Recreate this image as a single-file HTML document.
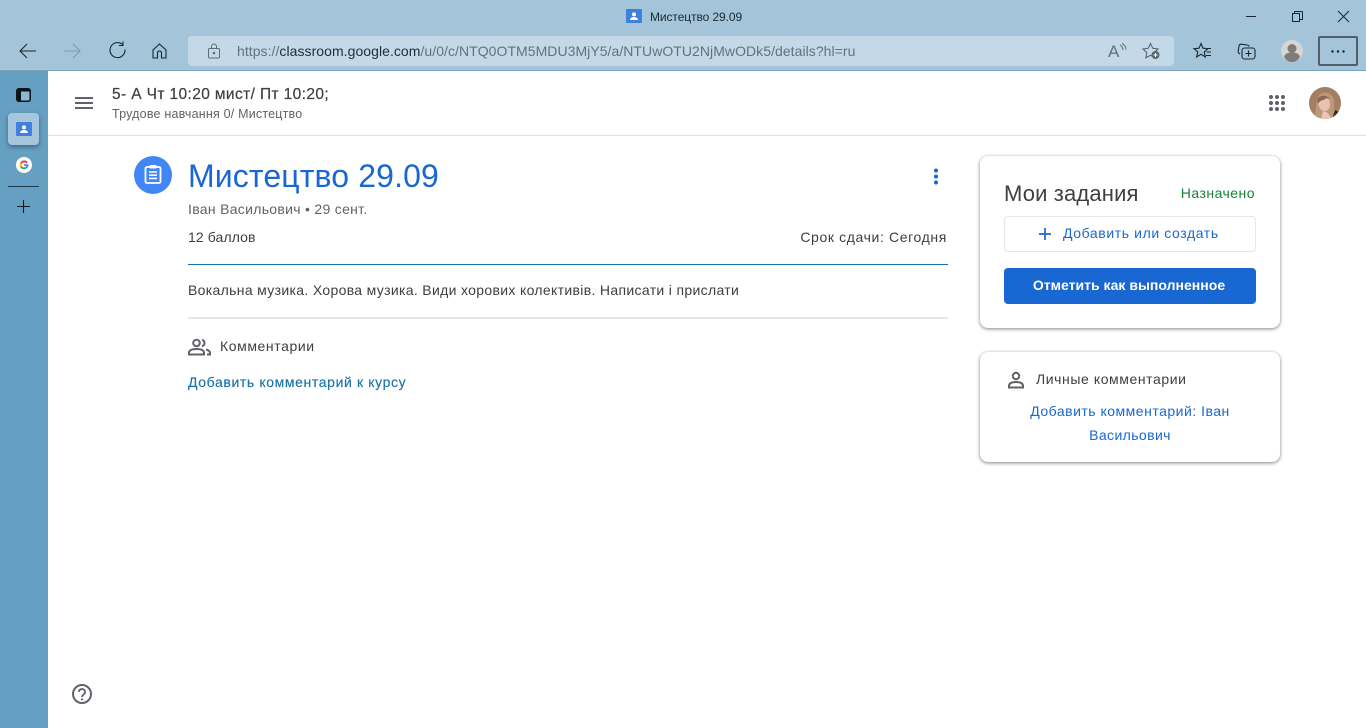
<!DOCTYPE html>
<html lang="ru"><head><meta charset="utf-8"><title>Мистецтво 29.09</title>
<style>
html,body{margin:0;padding:0;width:1366px;height:728px;overflow:hidden;background:#fff;font-family:"Liberation Sans",sans-serif}
.t{position:absolute;white-space:nowrap;line-height:1}
svg{position:absolute;overflow:visible}
.abs{position:absolute;box-sizing:border-box}
</style></head><body>
<div class="abs" style="left:0;top:0;width:1366px;height:70px;background:#a3c4d9"></div>
<div class="abs" style="left:0;top:70px;width:48px;height:658px;background:#659fc2"></div>
<div class="abs" style="left:0;top:70px;width:1366px;height:1px;background:#7fa3ba"></div>
<div class="abs" style="left:48px;top:71px;width:1318px;height:657px;background:#fff"></div>

<!-- title bar -->
<div class="abs" style="left:626px;top:9px;width:16px;height:14px;background:#3f7fe0;border-radius:1px"></div>
<svg style="left:626px;top:9px" width="16" height="14"><circle cx="8" cy="5.4" r="2" fill="#fff"/><path d="M4 11c0-2 2-3 4-3s4 1 4 3z" fill="#fff"/></svg>
<div class="t" style="left:650px;top:11px;font-size:12px;color:#1c2a33;letter-spacing:-.09px">Мистецтво 29.09</div>
<svg style="left:1240px;top:8px" width="116" height="16" fill="none" stroke="#1a2730" stroke-width="1"><path d="M6 8.500h10"/><path d="M52.500 5.500h7v8h-7z M54.500 5.500v-2h7q1 0 1 1v7h-2.500"/><path d="M98 3l11 11M109 3L98 14"/></svg>

<!-- nav -->
<svg style="left:18px;top:41px" width="160" height="20" fill="none" stroke="#1a2730" stroke-width="1.100">
<path d="M2 10h16M9 3l-7 7 7 7"/>
<path d="M46 10h16M55 3l7 7-7 7" stroke="#7d9bad"/>
<path d="M104.500 3.500a7.500 7.500 0 1 0 2.500 5M105 0.500v4h-4"/>
<path d="M135 9l6.500-6 6.500 6v8h-4.500v-5q0-2-2-2t-2 2v5H135z"/>
</svg>

<!-- address bar -->
<div class="abs" style="left:188px;top:36px;width:986px;height:30px;background:#c4d9e7;border-radius:4px"></div>
<svg style="left:207px;top:43px" width="14" height="16" fill="none" stroke="#5c6d78" stroke-width="1"><rect x="1.500" y="5.500" width="11" height="9.500" rx="1"/><path d="M4.500 5.500V3.500a2.500 2.500 0 0 1 5 0v2"/><circle cx="7" cy="10" r=".8" fill="#5c6d78"/></svg>
<div class="t" style="left:237px;top:44px;font-size:14px;color:#62727d;letter-spacing:.05px">https://<span style="color:#1f2d36">classroom.google.com</span>/u/0/c/NTQ0OTM5MDU3MjY5/a/NTUwOTU2NjMwODk5/details?hl=ru</div>
<div class="t" style="left:1108px;top:43px;font-size:17px;color:#5f717c">A</div>
<svg style="left:1119px;top:43px" width="8" height="10" fill="none" stroke="#5f717c"><path d="M1 2q3 2 3 5M3 .500q4 2 4 6"/></svg>
<svg style="left:1142px;top:42px" width="20" height="18" fill="none" stroke="#4e5f6a" stroke-width="1"><path d="M8.500 1.500l2.300 4.800 5.200.7-3.800 3.600.9 5.200-4.600-2.500-4.600 2.500.9-5.200L1 7l5.200-.7z"/><circle cx="13.500" cy="13" r="4" fill="#5a666e" stroke="none"/><path d="M11.500 13h4M13.500 11v4" stroke="#fff"/></svg>
<svg style="left:1193px;top:42px" width="20" height="18" fill="none" stroke="#1a2730" stroke-width="1.100"><path d="M8 1.500l2 4.700 5 .5-3.800 3.300 1.200 5L8 12.300l-4.400 2.700 1.200-5L1 6.700l5-.5z"/><path d="M13 6.500h5M13.500 10h4.500M13 13.500h5"/></svg>
<svg style="left:1237px;top:42px" width="20" height="18" fill="none" stroke="#1a2730" stroke-width="1.100"><path d="M3 12q-2-1-1.800-3l.8-5q.4-2 2.400-1.800l6 .8q1.500.3 1.600 1.600"/><rect x="5" y="6" width="13" height="11" rx="2.500"/><path d="M11.500 8.500v6M8.500 11.500h6"/></svg>
<svg style="left:1281px;top:40px" width="22" height="22"><circle cx="11" cy="11" r="11" fill="#d6d6d2"/><circle cx="11" cy="8.500" r="4.500" fill="#7e7b78"/><path d="M3 17q1-4.500 8-4.500t8 4.500q-3 5-8 5t-8-5z" fill="#7e7b78"/></svg>
<div class="abs" style="left:1318px;top:36px;width:40px;height:30px;border:2px solid #4f606c;border-radius:2px"></div>
<svg style="left:1331px;top:50px" width="14" height="3" fill="#16232c"><circle cx="1.500" cy="1.500" r="1.200"/><circle cx="7" cy="1.500" r="1.200"/><circle cx="12.500" cy="1.500" r="1.200"/></svg>

<!-- sidebar -->
<svg style="left:16px;top:88px" width="15" height="14"><rect x=".8" y=".8" width="13.400" height="12.400" rx="2" fill="#8fb8d2" stroke="#0c1419" stroke-width="1.500"/><path d="M1 1h13v2.500H5V13H3q-2 0-2-2z" fill="#0c1419"/></svg>
<div class="abs" style="left:8px;top:113px;width:31px;height:32px;background:#a8c6db;border-radius:4px;box-shadow:0 2px 4px rgba(30,60,85,.55)"></div>
<div class="abs" style="left:16px;top:122px;width:16px;height:14px;background:#3f7fe0;border-radius:1px"></div>
<svg style="left:16px;top:122px" width="16" height="14"><circle cx="8" cy="5.400" r="2" fill="#fff"/><path d="M4 11c0-2 2-3 4-3s4 1 4 3z" fill="#fff"/></svg>
<svg style="left:16px;top:157px" width="16" height="16"><circle cx="8" cy="8" r="8" fill="#fff"/><path d="M11.800 5.300A4.400 4.400 0 0 0 4.200 5.800l1.500 1.200a2.600 2.600 0 0 1 4.500-.5z" fill="#ea4335"/><path d="M4.200 5.800a4.400 4.400 0 0 0 0 4.400l1.500-1.200a2.600 2.600 0 0 1 0-2z" fill="#fbbc05"/><path d="M4.200 10.200a4.400 4.400 0 0 0 7 .6l-1.400-1.100a2.600 2.600 0 0 1-4.100-.7z" fill="#34a853"/><path d="M12.400 7.200H8v1.700h2.500a2.200 2.200 0 0 1-.7.900l1.400 1.100a4.400 4.400 0 0 0 1.200-3.700z" fill="#4285f4"/></svg>
<div class="abs" style="left:8px;top:186px;width:31px;height:1px;background:#1d3a4d"></div>
<svg style="left:17px;top:200px" width="13" height="13" stroke="#0f1a22" stroke-width="1.100"><path d="M6.500 0v13M0 6.500h13"/></svg>

<!-- header -->
<svg style="left:75px;top:97px" width="18" height="12" fill="#5f6368"><rect width="18" height="2"/><rect y="5" width="18" height="2"/><rect y="10" width="18" height="2"/></svg>
<div class="t" style="left:112px;top:87px;font-size:15.500px;color:#3c4043;font-weight:400;letter-spacing:.38px;-webkit-text-stroke:.2px #3c4043">5- А Чт 10:20 мист/ Пт 10:20;</div>
<div class="t" style="left:112px;top:108px;font-size:12.500px;color:#5f6368;letter-spacing:.2px">Трудове навчання 0/ Мистецтво</div>
<div class="abs" style="left:48px;top:135px;width:1318px;height:1px;background:#e0e0e0"></div>
<svg style="left:1269px;top:95px" width="16" height="16" fill="#5f6368"><circle cx="2" cy="2" r="2"/><circle cx="8" cy="2" r="2"/><circle cx="14" cy="2" r="2"/><circle cx="2" cy="8" r="2"/><circle cx="8" cy="8" r="2"/><circle cx="14" cy="8" r="2"/><circle cx="2" cy="14" r="2"/><circle cx="8" cy="14" r="2"/><circle cx="14" cy="14" r="2"/></svg>
<svg style="left:1309px;top:87px" width="32" height="32"><defs><clipPath id="c"><circle cx="16" cy="16" r="16"/></clipPath></defs><g clip-path="url(#c)"><rect width="32" height="32" fill="#a47d62"/><path d="M8 12q3-8 11-6 7 3 6 12l2 14H5l2-12z" fill="#b99a7c"/><path d="M9 15q1-6 7-5 5 2 5 7 0 7-6 7-5-1-6-9z" fill="#eec1ae"/><path d="M12 32l2-8 5 2 3 6z" fill="#f0c5b5"/><path d="M8 12q5-6 13-1-5 0-6 2-4 0-6 4z" fill="#8a6a54"/><path d="M23 32l3-9 4 2-2 7z" fill="#3a2a22"/></g></svg>

<!-- main -->
<div class="abs" style="left:134px;top:156px;width:38px;height:38px;border-radius:50%;background:#4285f4"></div>
<svg style="left:144px;top:164px" width="18" height="20" fill="none"><rect x="1.500" y="3" width="15" height="16" rx="1.500" stroke="#fff" stroke-width="1.800"/><rect x="5.500" y="1" width="7" height="3.500" rx=".8" fill="#fff"/><path d="M5 8h8M5 11.200h8M5 14.400h8" stroke="#fff" stroke-width="1.600"/></svg>
<div class="t" style="left:188px;top:160px;font-size:32px;color:#1967d2;letter-spacing:.13px">Мистецтво 29.09</div>
<svg style="left:933px;top:168px" width="6" height="17" fill="#1967d2"><circle cx="3" cy="2.500" r="2"/><circle cx="3" cy="8.500" r="2"/><circle cx="3" cy="14.500" r="2"/></svg>
<div class="t" style="left:188px;top:202px;font-size:14px;color:#5f6368;letter-spacing:.3px">Іван Васильович • 29 сент.</div>
<div class="t" style="left:188px;top:230px;font-size:14px;color:#3c4043;letter-spacing:.1px">12 баллов</div>
<div class="t" style="right:419px;top:230px;font-size:14px;color:#3c4043;letter-spacing:.62px">Срок сдачи: Сегодня</div>
<div class="abs" style="left:188px;top:264px;width:760px;height:1px;background:#1a73a8"></div>
<div class="t" style="left:188px;top:283px;font-size:14px;color:#3c4043;letter-spacing:.33px">Вокальна музика. Хорова музика. Види хорових колективів. Написати і прислати</div>
<div class="abs" style="left:188px;top:317px;width:760px;height:2px;background:#e6e6e6"></div>
<svg style="left:188px;top:338px" width="23" height="18" fill="none" stroke="#5f6368" stroke-width="2"><circle cx="8.500" cy="5" r="3.300"/><path d="M1 16.500v-1.500q0-4 7.500-4t7.500 4v1.500z"/><path d="M14 1.800a3.300 3.300 0 0 1 0 6.400M18 11.500q4 1 4 3.500v1.500h-3"/></svg>
<div class="t" style="left:220px;top:339px;font-size:14px;color:#3c4043;letter-spacing:.59px">Комментарии</div>
<div class="t" style="left:188px;top:375px;font-size:14px;color:#1a73a8;letter-spacing:.62px;-webkit-text-stroke:.15px #1a73a8">Добавить комментарий к курсу</div>

<!-- cards -->
<div class="abs" style="left:980px;top:156px;width:300px;height:172px;background:#fff;border-radius:8px;box-shadow:0 1px 3px rgba(60,64,67,.5),0 1px 4px rgba(60,64,67,.2)"></div>
<div class="t" style="left:1004px;top:183px;font-size:22px;color:#3c4043;letter-spacing:.15px">Мои задания</div>
<div class="t" style="right:111px;top:186px;font-size:14px;color:#188038;letter-spacing:.47px">Назначено</div>
<div class="abs" style="left:1004px;top:216px;width:252px;height:36px;border:1px solid #e4e6e8;border-radius:4px"></div>
<svg style="left:1038px;top:227px" width="14" height="14" stroke="#1967d2" stroke-width="1.700"><path d="M7 1v12M1 7h12"/></svg>
<div class="t" style="left:1063px;top:226px;font-size:14px;color:#1967d2;letter-spacing:.6px">Добавить или создать</div>
<div class="abs" style="left:1004px;top:268px;width:252px;height:36px;background:#1967d2;border-radius:4px"></div>
<div class="t" style="left:1003px;width:252px;text-align:center;top:278px;font-size:14px;font-weight:700;color:#fff;letter-spacing:.02px">Отметить как выполненное</div>

<div class="abs" style="left:980px;top:352px;width:300px;height:110px;background:#fff;border-radius:8px;box-shadow:0 1px 3px rgba(60,64,67,.5),0 1px 4px rgba(60,64,67,.2)"></div>
<svg style="left:1007px;top:371px" width="18" height="18" fill="none" stroke="#5f6368" stroke-width="2"><circle cx="9" cy="5" r="3.200"/><path d="M2 16.500v-1.500q0-4 7-4t7 4v1.500z"/></svg>
<div class="t" style="left:1036px;top:372px;font-size:14px;color:#3c4043;letter-spacing:.58px">Личные комментарии</div>
<div class="t" style="left:980px;width:300px;text-align:center;top:404px;font-size:14px;color:#1967d2;letter-spacing:.5px">Добавить комментарий: Іван</div>
<div class="t" style="left:980px;width:300px;text-align:center;top:428px;font-size:14px;color:#1967d2;letter-spacing:.4px">Васильович</div>

<!-- help -->
<svg style="left:72px;top:684px" width="20" height="20" fill="none"><circle cx="10" cy="10" r="9" stroke="#5f6368" stroke-width="2"/><path d="M7 8a3 3 0 1 1 4.800 2.400c-1.200.9-1.800 1.300-1.800 2.600" stroke="#5f6368" stroke-width="1.800"/><circle cx="10" cy="15.300" r="1.100" fill="#5f6368"/></svg>
</body></html>
